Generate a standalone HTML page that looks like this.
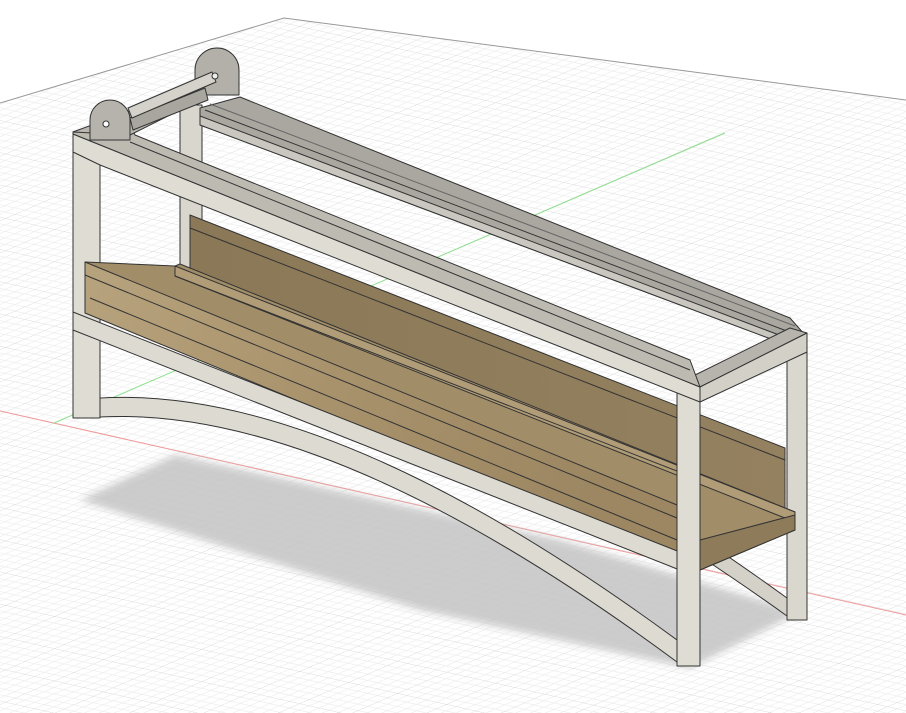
<!DOCTYPE html>
<html><head><meta charset="utf-8"><style>html,body{margin:0;padding:0;background:#fff}svg{display:block}</style></head>
<body>
<svg width="906" height="713" viewBox="0 0 906 713" xmlns="http://www.w3.org/2000/svg">
<defs>
<pattern id="g" width="50" height="50" patternUnits="userSpaceOnUse" patternTransform="matrix(0.98,0.22,0.98,-0.425,54,423)">
<path d="M10 0V50M20 0V50M30 0V50M40 0V50M0 10H50M0 20H50M0 30H50M0 40H50" stroke="#ececec" stroke-width="1"/>
<path d="M0 0V50M0 0H50" stroke="#d2d2d2" stroke-width="1.2"/>
</pattern>
<clipPath id="pl"><polygon points="0,103 284,18 906,100 906,713 0,713"/></clipPath>
<linearGradient id="tan" x1="0" y1="0" x2="1" y2="0.3"><stop offset="0" stop-color="#b7a37d"/><stop offset="0.5" stop-color="#a8926c"/><stop offset="1" stop-color="#9c8762"/></linearGradient>
<linearGradient id="wall" x1="0" y1="0" x2="1" y2="0"><stop offset="0" stop-color="#8a7857"/><stop offset="1" stop-color="#94815f"/></linearGradient>
<filter id="bl"><feGaussianBlur stdDeviation="4"/></filter>
</defs>
<rect width="906" height="713" fill="#fff"/>
<rect width="906" height="713" fill="url(#g)" clip-path="url(#pl)"/>
<polyline points="0,103 284,18 906,100" fill="none" stroke="#999" stroke-width="1"/>
<line x1="0" y1="411" x2="906" y2="615" stroke="#f09a9a" stroke-width="1"/>
<line x1="54" y1="423" x2="725" y2="133" stroke="#8fe08f" stroke-width="1"/>
<polygon points="80,500 175,455 560,540 800,612 690,668 420,610" fill="#c4c4c4" opacity="0.85" filter="url(#bl)"/>
<g stroke="#333" stroke-width="1" stroke-linejoin="round">
<rect x="180" y="105" width="22" height="180" fill="#d8d6cd"/>
<rect x="787" y="335" width="20" height="285" fill="#d9d7ce"/>
<path d="M300,360 Q500,390 787,598 L787,616 Q500,410 300,378 Z" fill="#d3d1c8"/>
<polygon points="200,108 240,97 790,318 805,335 787,345 200,125" fill="#a9a7a0"/>
<polygon points="200,116 787,338 787,345 200,125" fill="#c9c7bf"/>
<line x1="205" y1="110" x2="792" y2="333"/>
<line x1="210" y1="104" x2="795" y2="326" stroke="#666"/>
<polygon points="190,215 785,448 785,520 190,280" fill="url(#wall)"/>
<line x1="190" y1="228" x2="785" y2="460"/>
<rect x="73" y="132" width="27" height="286" fill="#dedcd3"/>
<polygon points="85,262 175,266 180,264 795,512 795,530 700,570 677,558 85,312" fill="#a18d68"/>
<polygon points="175,266 795,512 795,522 175,276" fill="#b09c77"/>
<line x1="175" y1="276" x2="700" y2="480"/>
<polygon points="700,540 795,515 795,530 700,570" fill="#8e7b5a"/>
<polygon points="85,262 677,505 677,557 85,313" fill="url(#tan)"/>
<line x1="85" y1="275" x2="677" y2="518"/>
<line x1="90" y1="298" x2="677" y2="540"/>
<polygon points="73,312 700,560 700,578 73,330" fill="#dcdad1"/>
<path d="M100,398 Q330,385 677,640 L677,662 Q330,405 100,417 Z" fill="#dcdad1"/>
<rect x="677" y="385" width="23" height="281" fill="#dedcd3"/>
<polygon points="73,134 700,387 700,402 100,165 73,152" fill="#dedcd3"/>
<polygon points="685,380 790,328 807,333 700,387" fill="#b6b4ac"/>
<polygon points="700,387 807,333 807,352 700,402" fill="#d2d0c7"/>
<polygon points="73,132 125,114 135,135 690,360 700,387 73,134" fill="#bdbab2"/>
<line x1="130" y1="142" x2="690" y2="370"/>
<polygon points="73,132 180,92 200,100 130,135" fill="#b8b6ae"/>
<path d="M195,95 L195,70 A22,22 0 0 1 239,70 L239,95 Z" fill="#b2b0a8"/>
<polygon points="130,118 205,88 208,100 133,130" fill="#a8a69f"/>
<polygon points="128,108 212,72 216,82 132,118" fill="#d4d2ca"/>
<path d="M90,140 L90,120 A20,20 0 0 1 130,120 L130,140 Z" fill="#b5b3ab"/>
<circle cx="106" cy="124" r="3" fill="#fff"/>
<circle cx="215" cy="76" r="3" fill="#eee"/>
</g>
</svg>
</body></html>
